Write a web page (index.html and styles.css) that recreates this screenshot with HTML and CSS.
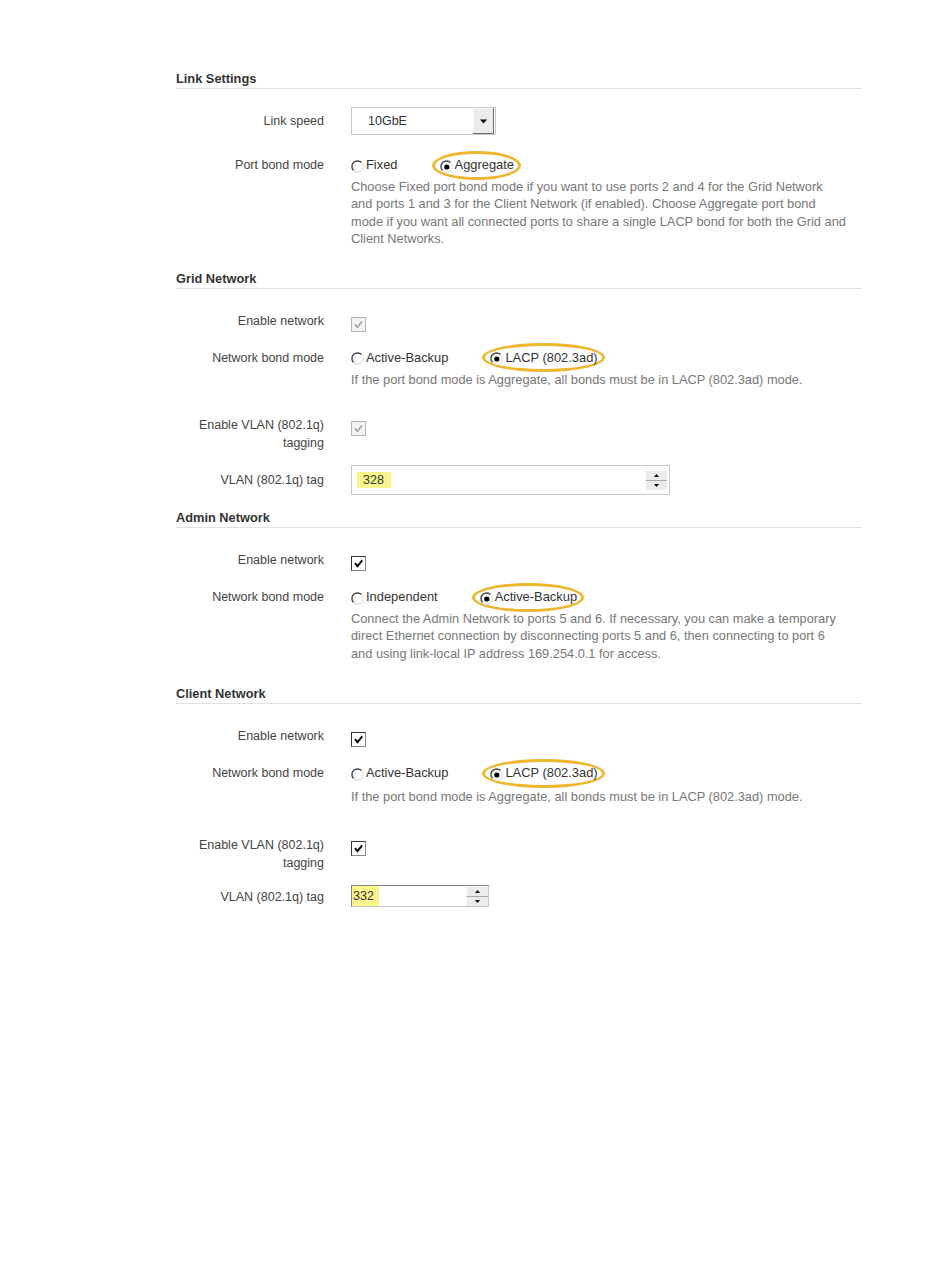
FILE: index.html
```html
<!DOCTYPE html>
<html lang="en">
  <head>
    <meta charset="UTF-8" />
    <meta name="viewport" content="width=device-width, initial-scale=1.0" />
    <title>Network Link Configuration</title>
    <link rel="stylesheet" href="styles.css">
  </head>
  <body>
    <div class="page">

      <!-- Link settings -->
      <section class="group">
        <h2 class="group-title">Link Settings</h2>

        <div class="field field-tall">
          <div class="field-label">Link speed</div>
          <div class="field-control">
            <div class="select">
              <span class="select-value">10GbE</span>
              <span class="select-btn">
                <svg width="9" height="5" viewBox="0 0 9 5"><path d="M1 0.5 H8 L4.5 4.5 Z" fill="#000"/></svg>
              </span>
            </div>
          </div>
        </div>

        <div class="field field-bond">
          <div class="field-label">Port bond mode</div>
          <div class="field-control">
            <div class="radios">
              <label class="radio">
                <svg class="radio-icon" viewBox="0 0 13 13"><path d="M2.6 10.6 A5.6 5.6 0 0 1 10.6 2.6" fill="none" stroke="#444" stroke-width="1.4"/><path d="M10.6 2.6 A5.6 5.6 0 0 1 2.6 10.6" fill="none" stroke="#e2e2e2" stroke-width="1.3"/></svg>
                Fixed
              </label>
              <label class="radio is-marked">
                <svg class="radio-icon" viewBox="0 0 13 13"><path d="M2.6 10.6 A5.6 5.6 0 0 1 10.6 2.6" fill="none" stroke="#444" stroke-width="1.4"/><path d="M10.6 2.6 A5.6 5.6 0 0 1 2.6 10.6" fill="none" stroke="#e2e2e2" stroke-width="1.3"/><circle cx="6.8" cy="7" r="2.6" fill="#000"/></svg>
                Aggregate
              </label>
            </div>
            <p class="help">
              Choose Fixed port bond mode if you want to use ports 2 and 4 for the Grid Network<br>
              and ports 1 and 3 for the Client Network (if enabled). Choose Aggregate port bond<br>
              mode if you want all connected ports to share a single LACP bond for both the Grid and<br>
              Client Networks.
            </p>
          </div>
        </div>
      </section>

      <!-- Grid network -->
      <section class="group group-grid">
        <h2 class="group-title">Grid Network</h2>

        <div class="field field-first">
          <div class="field-label">Enable network</div>
          <div class="field-control">
            <span class="checkbox is-disabled">
              <svg viewBox="0 0 15 15"><path d="M3.5 7.5 L6.2 10.5 L11.5 4" fill="none" stroke="#999" stroke-width="1.6"/></svg>
            </span>
          </div>
        </div>

        <div class="field">
          <div class="field-label">Network bond mode</div>
          <div class="field-control">
            <div class="radios">
              <label class="radio">
                <svg class="radio-icon" viewBox="0 0 13 13"><path d="M2.6 10.6 A5.6 5.6 0 0 1 10.6 2.6" fill="none" stroke="#444" stroke-width="1.4"/><path d="M10.6 2.6 A5.6 5.6 0 0 1 2.6 10.6" fill="none" stroke="#e2e2e2" stroke-width="1.3"/></svg>
                Active-Backup
              </label>
              <label class="radio is-marked">
                <svg class="radio-icon" viewBox="0 0 13 13"><path d="M2.6 10.6 A5.6 5.6 0 0 1 10.6 2.6" fill="none" stroke="#444" stroke-width="1.4"/><path d="M10.6 2.6 A5.6 5.6 0 0 1 2.6 10.6" fill="none" stroke="#e2e2e2" stroke-width="1.3"/><circle cx="6.8" cy="7" r="2.6" fill="#000"/></svg>
                LACP (802.3ad)
              </label>
            </div>
            <p class="help">If the port bond mode is Aggregate, all bonds must be in LACP (802.3ad) mode.</p>
          </div>
        </div>

        <div class="field field-vlan">
          <div class="field-label">Enable VLAN (802.1q)<br>tagging</div>
          <div class="field-control">
            <span class="checkbox is-disabled">
              <svg viewBox="0 0 15 15"><path d="M3.5 7.5 L6.2 10.5 L11.5 4" fill="none" stroke="#999" stroke-width="1.6"/></svg>
            </span>
          </div>
        </div>

        <div class="field field-input">
          <div class="field-label">VLAN (802.1q) tag</div>
          <div class="field-control">
            <div class="number number-wide">
              <span class="number-value"><span class="mark">328</span></span>
              <span class="spinner">
                <span class="spin-btn"><svg width="5" height="3" viewBox="0 0 5 3"><path d="M0 3 H5 L2.5 0 Z" fill="#000"/></svg></span>
                <span class="spin-btn"><svg width="5" height="3" viewBox="0 0 5 3"><path d="M0 0 H5 L2.5 3 Z" fill="#000"/></svg></span>
              </span>
            </div>
          </div>
        </div>
      </section>

      <!-- Admin network -->
      <section class="group group-admin">
        <h2 class="group-title">Admin Network</h2>

        <div class="field field-first">
          <div class="field-label">Enable network</div>
          <div class="field-control">
            <span class="checkbox">
              <svg viewBox="0 0 15 15"><path d="M3.5 7 L6.3 10.6 L11.8 3.8" fill="none" stroke="#000" stroke-width="2.2"/></svg>
            </span>
          </div>
        </div>

        <div class="field">
          <div class="field-label">Network bond mode</div>
          <div class="field-control">
            <div class="radios">
              <label class="radio">
                <svg class="radio-icon" viewBox="0 0 13 13"><path d="M2.6 10.6 A5.6 5.6 0 0 1 10.6 2.6" fill="none" stroke="#444" stroke-width="1.4"/><path d="M10.6 2.6 A5.6 5.6 0 0 1 2.6 10.6" fill="none" stroke="#e2e2e2" stroke-width="1.3"/></svg>
                Independent
              </label>
              <label class="radio is-marked">
                <svg class="radio-icon" viewBox="0 0 13 13"><path d="M2.6 10.6 A5.6 5.6 0 0 1 10.6 2.6" fill="none" stroke="#444" stroke-width="1.4"/><path d="M10.6 2.6 A5.6 5.6 0 0 1 2.6 10.6" fill="none" stroke="#e2e2e2" stroke-width="1.3"/><circle cx="6.8" cy="7" r="2.6" fill="#000"/></svg>
                Active-Backup
              </label>
            </div>
            <p class="help">
              Connect the Admin Network to ports 5 and 6. If necessary, you can make a temporary<br>
              direct Ethernet connection by disconnecting ports 5 and 6, then connecting to port 6<br>
              and using link-local IP address 169.254.0.1 for access.
            </p>
          </div>
        </div>
      </section>

      <!-- Client network -->
      <section class="group group-client">
        <h2 class="group-title">Client Network</h2>

        <div class="field field-first">
          <div class="field-label">Enable network</div>
          <div class="field-control">
            <span class="checkbox">
              <svg viewBox="0 0 15 15"><path d="M3.5 7 L6.3 10.6 L11.8 3.8" fill="none" stroke="#000" stroke-width="2.2"/></svg>
            </span>
          </div>
        </div>

        <div class="field">
          <div class="field-label">Network bond mode</div>
          <div class="field-control">
            <div class="radios">
              <label class="radio">
                <svg class="radio-icon" viewBox="0 0 13 13"><path d="M2.6 10.6 A5.6 5.6 0 0 1 10.6 2.6" fill="none" stroke="#444" stroke-width="1.4"/><path d="M10.6 2.6 A5.6 5.6 0 0 1 2.6 10.6" fill="none" stroke="#e2e2e2" stroke-width="1.3"/></svg>
                Active-Backup
              </label>
              <label class="radio is-marked">
                <svg class="radio-icon" viewBox="0 0 13 13"><path d="M2.6 10.6 A5.6 5.6 0 0 1 10.6 2.6" fill="none" stroke="#444" stroke-width="1.4"/><path d="M10.6 2.6 A5.6 5.6 0 0 1 2.6 10.6" fill="none" stroke="#e2e2e2" stroke-width="1.3"/><circle cx="6.8" cy="7" r="2.6" fill="#000"/></svg>
                LACP (802.3ad)
              </label>
            </div>
            <p class="help help-low">If the port bond mode is Aggregate, all bonds must be in LACP (802.3ad) mode.</p>
          </div>
        </div>

        <div class="field field-vlan field-vlan-client">
          <div class="field-label">Enable VLAN (802.1q)<br>tagging</div>
          <div class="field-control">
            <span class="checkbox">
              <svg viewBox="0 0 15 15"><path d="M3.5 7 L6.3 10.6 L11.8 3.8" fill="none" stroke="#000" stroke-width="2.2"/></svg>
            </span>
          </div>
        </div>

        <div class="field field-small">
          <div class="field-label">VLAN (802.1q) tag</div>
          <div class="field-control">
            <div class="number number-small">
              <span class="number-value"><span class="mark">332</span></span>
              <span class="spinner">
                <span class="spin-btn"><svg width="5" height="3" viewBox="0 0 5 3"><path d="M0 3 H5 L2.5 0 Z" fill="#000"/></svg></span>
                <span class="spin-btn"><svg width="5" height="3" viewBox="0 0 5 3"><path d="M0 0 H5 L2.5 3 Z" fill="#000"/></svg></span>
              </span>
            </div>
          </div>
        </div>
      </section>

    </div>
  </body>
</html>
```

FILE: styles.css
```css
body {
  margin: 0;
  background: #fff;
  font-family: "Liberation Sans", Arial, sans-serif;
  font-size: 12.5px;
  color: #333;
}
.page {
  width: 686px;
  margin-left: 176px;
  padding-top: 70px;
}

/* Section heading with rule */
.group-title {
  margin: 0;
  font-size: 12.8px;
  font-weight: bold;
  line-height: 18px;
  color: #333;
  border-bottom: 1px solid #e2e2e2;
}
.group-grid { margin-top: 22px; }
.group-admin { margin-top: 14px; }
.group-client { margin-top: 23px; }

/* Form rows */
.field {
  display: grid;
  grid-template-columns: 148px 1fr;
  column-gap: 27px;
  margin-top: 13px;
  line-height: 24px;
}
.field-first { margin-top: 20px; }
.field-tall,
.field-bond { margin-top: 18px; }
.field-vlan { margin-top: 28px; line-height: 18px; }
.field-vlan-client { margin-top: 30px; }
.field-small { margin-top: 13px; }
.field-label {
  text-align: right;
  color: #444;
}
.field-tall .field-label,
.field-input .field-label,
.field-small .field-label {
  align-self: center;
}
.field-bond .help { margin-top: 1px; }

/* Select */
.select {
  width: 145px;
  height: 28px;
  box-sizing: border-box;
  border: 1px solid #c9c9c9;
  display: flex;
  justify-content: space-between;
  align-items: stretch;
}
.select-value {
  padding-left: 16px;
  line-height: 26px;
}
.select-btn {
  width: 21px;
  margin-right: 1px;
  background: #ececec;
  border-left: 1px solid #fff;
  box-shadow: inset -1px -1px 0 #6e6e6e, inset 1px 1px 0 #fafafa;
  display: flex;
  align-items: center;
  justify-content: center;
}

/* Radio buttons */
.radios {
  display: flex;
  align-items: center;
  height: 24px;
}
.radio {
  display: inline-flex;
  align-items: center;
  margin-right: 34px;
  font-size: 12.9px;
  color: #333;
}
.radio-icon {
  width: 13px;
  height: 13px;
  margin-right: 2px;
  margin-top: 2px;
}
.radio.is-marked {
  height: 29px;
  box-sizing: border-box;
  border: 3px solid #efb52f;
  border-radius: 50%;
  padding: 0 4px 0 5px;
}

/* Help text */
.help {
  margin: 1px 0 0;
  font-size: 12.8px;
  line-height: 17.4px;
  color: #777;
}
.help-low { margin-top: 3px; }

/* Checkboxes */
.checkbox {
  display: block;
  width: 15px;
  height: 15px;
  box-sizing: border-box;
  margin-top: 8px;
  border: 1px solid #8a8a8a;
  border-top-color: #333;
  border-left-color: #333;
  background: #fff;
}
.checkbox svg {
  display: block;
  width: 13px;
  height: 13px;
}
.checkbox.is-disabled {
  border-color: #b5b5b5;
  background: #f2f2f2;
}
.field-vlan .checkbox { margin-top: 5px; }

/* Number inputs */
.number {
  display: flex;
  align-items: center;
  justify-content: space-between;
  box-sizing: border-box;
  border: 1px solid #c9c9c9;
  line-height: 16px;
}
.number-wide {
  width: 319px;
  height: 30px;
  padding: 0 2px 0 5px;
}
.number-small {
  width: 138px;
  height: 22px;
  padding: 0;
  border-top-color: #888;
  border-left-color: #888;
}
.mark {
  display: inline-block;
  background: #fbf68c;
  padding: 0 7px 0 6px;
}
.number-small .number-value { align-self: stretch; }
.number-small .mark {
  height: 100%;
  line-height: 20px;
  padding: 0 5px 0 1px;
}
.spinner {
  display: flex;
  flex-direction: column;
  width: 22px;
  box-shadow: inset -1px -1px 0 #6e6e6e;
}
.spin-btn {
  height: 10px;
  display: flex;
  align-items: center;
  justify-content: center;
  background: #ececec;
  border-top: 1px solid #fafafa;
  border-left: 1px solid #fafafa;
  box-sizing: border-box;
}
.spin-btn + .spin-btn { border-top: 1px solid #aaa; }
```
